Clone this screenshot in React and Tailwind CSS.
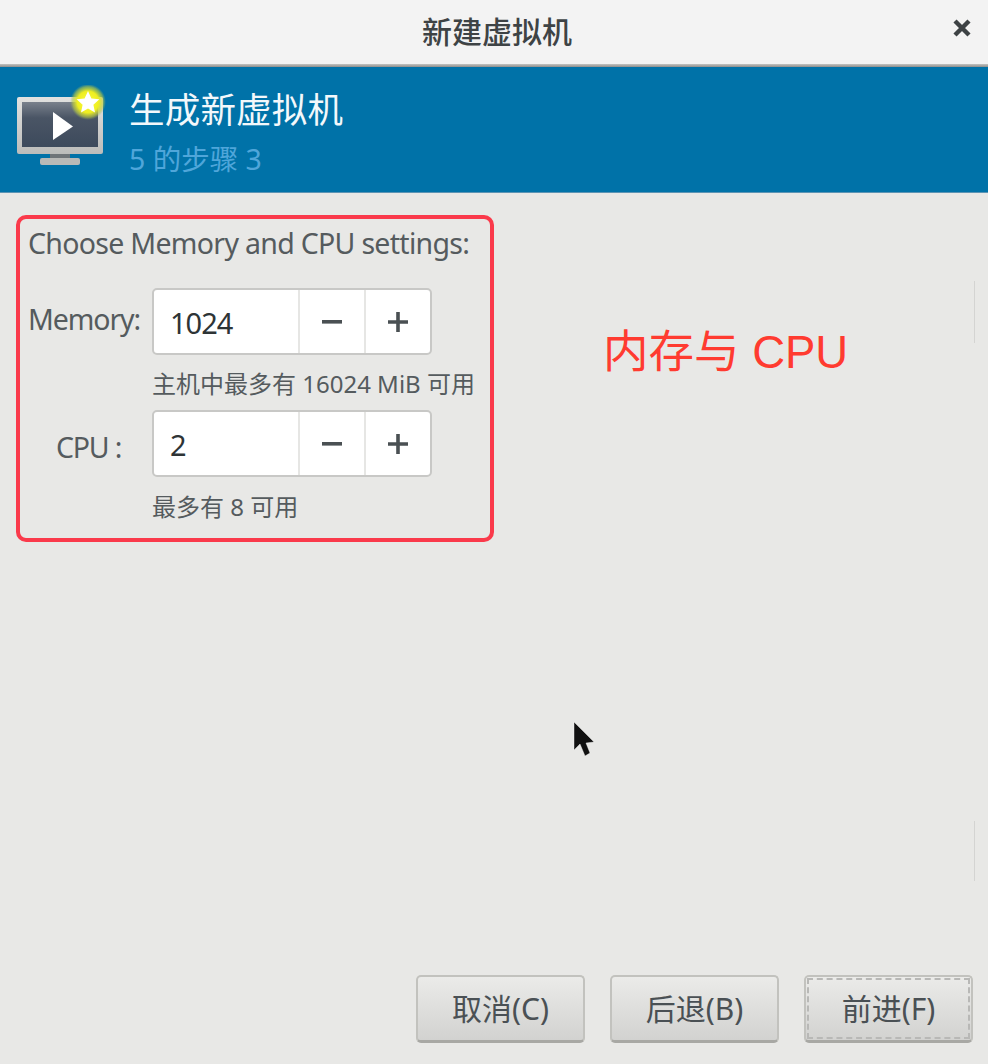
import React from "react";

const FONT = "font-['Noto_Sans','Noto_Sans_CJK_SC',sans-serif]";

function MonitorIcon() {
  return (
    <svg width="92" height="92" viewBox="0 0 92 92" className="shrink-0">
      <defs>
        <linearGradient id="scr" x1="0" y1="0" x2="0" y2="1">
          <stop offset="0" stopColor="#7a818c" />
          <stop offset="0.35" stopColor="#4a5565" />
          <stop offset="1" stopColor="#3d4a5c" />
        </linearGradient>
        <linearGradient id="frm" x1="0" y1="0" x2="0" y2="1">
          <stop offset="0" stopColor="#e2e2e0" />
          <stop offset="1" stopColor="#bcbcba" />
        </linearGradient>
        <radialGradient id="glow">
          <stop offset="0" stopColor="#fbfb40" />
          <stop offset="0.6" stopColor="#eeee20" />
          <stop offset="0.85" stopColor="#bccc40" stopOpacity="0.6" />
          <stop offset="1" stopColor="#8ab060" stopOpacity="0" />
        </radialGradient>
      </defs>
      <rect x="1" y="12" width="86" height="57" rx="2" fill="url(#frm)" />
      <rect x="6" y="17" width="76" height="45" fill="url(#scr)" />
      <path d="M37 27 L57 41.5 L37 55 Z" fill="#ffffff" />
      <rect x="34" y="69" width="20" height="4" fill="#6f7478" />
      <rect x="24" y="73" width="40" height="7" rx="2" fill="#b9b9b7" />
      <circle cx="72" cy="17" r="18" fill="url(#glow)" />
      <path d="M72 6 L75.4 13.4 L83.4 14.3 L77.4 19.7 L79 27.6 L72 23.6 L65 27.6 L66.6 19.7 L60.6 14.3 L68.6 13.4 Z" fill="#ffffff" />
    </svg>
  );
}

function Spin({ value }) {
  return (
    <div className="flex w-[280px] h-[67px] bg-white border-2 border-[#c8c8c6] rounded-[5px] text-[#2e3436]">
      <div className="w-[144px] flex items-center pl-[16px] text-[29px] tracking-[-1px] pt-[2px]">{value}</div>
      <div className="w-[66px] flex items-center justify-center border-l-2 border-[#e6e6e4]">
        <svg width="22" height="22" viewBox="0 0 22 22"><rect x="1" y="9" width="20" height="3.6" fill="#4a5053" /></svg>
      </div>
      <div className="flex-1 flex items-center justify-center border-l-2 border-[#e6e6e4]">
        <svg width="22" height="22" viewBox="0 0 22 22"><path d="M1 9.2h8.2V1h3.6v8.2H21v3.6h-8.2V21H9.2v-8.2H1z" fill="#4a5053" /></svg>
      </div>
    </div>
  );
}

function Btn({ children, focus }) {
  return (
    <button className="relative w-[169px] h-[68px] rounded-[5px] border-2 border-[#c2c2be] border-b-[3px] border-b-[#a8a8a4] bg-gradient-to-b from-[#ebebe9] to-[#d2d2d0] text-[30px] text-[#4a5054] flex items-center justify-center">
      {focus && <span className="absolute inset-[1px] border-2 border-dashed border-[#b8b8b6]" />}
      {children}
    </button>
  );
}

export default function App() {
  return (
    <div className={`relative w-[988px] h-[1064px] flex flex-col bg-[#e8e8e6] overflow-hidden ${FONT}`}>
      <header className="relative h-[64px] bg-[#f3f3f3] flex items-center justify-center shrink-0 pl-[6px] pb-[2px]">
        <span className="text-[30px] font-medium text-[#3e4345]">新建虚拟机</span>
        <svg width="20" height="20" viewBox="0 0 20 20" className="absolute left-[952px] top-[18px]">
          <path d="M3 3 L17 17 M17 3 L3 17" stroke="#3d4244" strokeWidth="4.4" />
        </svg>
      </header>
      <div className="h-[3px] shrink-0 bg-gradient-to-b from-[#c4c4c2] to-[#8e8e8c]" />
      <div className="h-[126px] shrink-0 bg-[#0072a8] flex items-start pl-[16px] pt-[18px] border-b border-[#5c94b4]">
        <MonitorIcon />
        <div className="ml-[21px] flex flex-col">
          <div className="text-[35.5px] leading-[48px] tracking-[0.2px] text-[#f3f8fb]">生成新虚拟机</div>
          <div className="text-[28.5px] leading-[40px] mt-[6px] text-[#4fa6da]">5 的步骤 3</div>
        </div>
      </div>

      <main className="flex-1 relative flex flex-col pl-[16px] pr-[15px] pt-[22px] pb-[21px]">
        <div className="flex items-start">
          <section className="w-[478px] h-[327px] border-[4px] border-[#fa3a4b] rounded-[10px] pl-[8px] pt-[6px] text-[#555b5e]">
            <div className="text-[28.5px] leading-[36px] tracking-[-0.7px] whitespace-nowrap">Choose Memory and CPU settings:</div>
            <div className="flex items-center mt-[27px]">
              <div className="w-[124px] text-[28.5px] tracking-[-1.1px] pb-[5px]">Memory:</div>
              <Spin value="1024" />
            </div>
            <div className="ml-[124px] mt-[14px] h-[30px] leading-[30px] text-[24px] whitespace-nowrap">主机中最多有 16024 MiB 可用</div>
            <div className="flex items-center mt-[11px]">
              <div className="w-[124px] pl-[28px] pt-[7px] text-[28.5px] tracking-[-1.2px] whitespace-nowrap">CPU :</div>
              <Spin value="2" />
            </div>
            <div className="ml-[124px] mt-[15px] h-[30px] leading-[30px] text-[24px] whitespace-nowrap">最多有 8 可用</div>
          </section>
          <div className="ml-[109px] mt-[108px] text-[45.5px] leading-[60px] text-[#ff3b30] font-['Liberation_Sans','Noto_Sans_CJK_SC',sans-serif] whitespace-nowrap">内存与 CPU</div>
        </div>

        <div className="mt-auto flex justify-end gap-[25px]">
          <Btn>取消(C)</Btn>
          <Btn>后退(B)</Btn>
          <Btn focus>前进(F)</Btn>
        </div>

        <span className="absolute left-[974px] top-[88px] w-[1px] h-[62px] bg-[#d4d4d2]" />
        <span className="absolute left-[974px] top-[628px] w-[1px] h-[60px] bg-[#d4d4d2]" />
        <svg width="26" height="40" viewBox="0 0 26 40" className="absolute left-[572px] top-[527px]">
          <path d="M2 2 V30 L8 24 L13 36 L18 33 L14 23 L22 22 Z" fill="#111" stroke="#fff" strokeWidth="0.8" strokeOpacity="0.5" />
        </svg>
      </main>
    </div>
  );
}
